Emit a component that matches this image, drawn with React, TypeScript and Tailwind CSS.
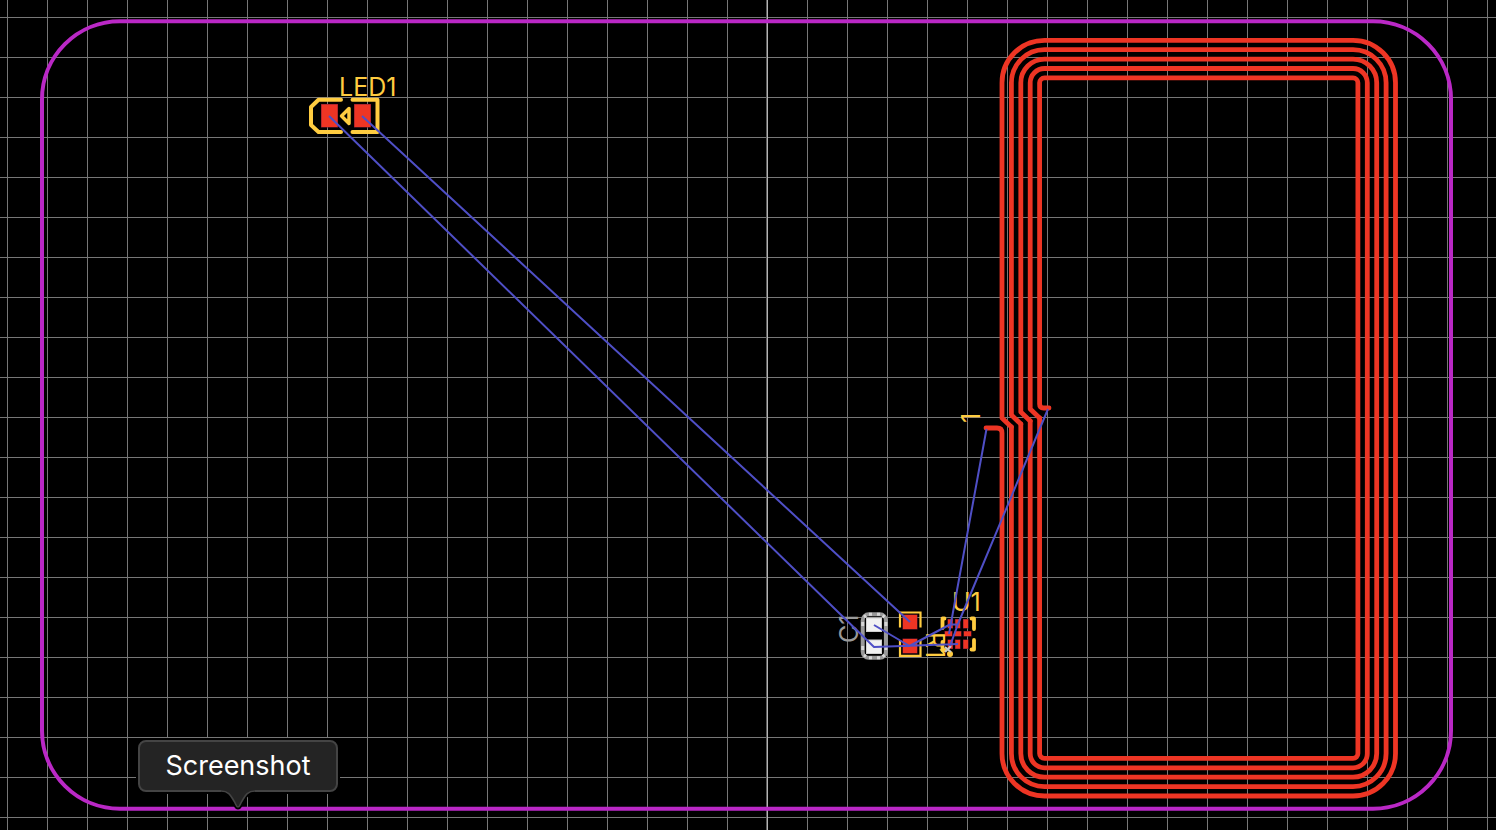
import React from "react";

const CENTER_X = 1044.5;
const RED = "#ee3524";
const GOLD = "#ffcc40";
const VIOLET = "#4f4fc6";

const columns = Array.from({ length: 38 }, (_, i) => 7 + i * 40);
const rows = Array.from({ length: 21 }, (_, i) => 17 + i * 40);

const coilTurns = [
  { from: 418, next: 427 },
  { from: 415, next: 424 },
  { from: 412, next: 421 },
  { from: 409, next: 418 },
  { from: 404, next: 0 },
];

/* One turn runs from its lower left start around to its upper left end. */
function turnPath(i: number): string {
  const inset = i * 9.4;
  const left = 1002 + inset;
  const right = 1395.5 - inset;
  const top = 40.3 + inset;
  const bottom = 796 - inset;
  const r = CENTER_X - left;
  const startY = i === 0 ? 433 : coilTurns[i - 1].next;
  const lead = i === 0 ? "M986 428H997Q1002 428 1002 433" : `M${left} ${startY}`;
  const tail =
    i === 4
      ? `V404Q${left} 408 ${left + 4} 408H1049`
      : `V${coilTurns[i].from}L${left + 9.4} ${coilTurns[i].next}`;
  return (
    `${lead}V${bottom - r}A${r} ${r} 0 0 0 ${left + r} ${bottom}H${right - r}` +
    `A${r} ${r} 0 0 0 ${right} ${bottom - r}V${top + r}A${r} ${r} 0 0 0 ${right - r} ${top}` +
    `H${left + r}A${r} ${r} 0 0 0 ${left} ${top + r}${tail}`
  );
}

function Grid() {
  return (
    <g shapeRendering="crispEdges" fill="#777777">
      {columns.map((x) => (
        <rect key={x} x={x} y="0" width="1" height="830" />
      ))}
      {rows.map((y) => (
        <rect key={y} x="0" y={y} width="1496" height="1" />
      ))}
      <rect x="766" y="0" width="1" height="830" fill="#5c5c5c" />
      <rect x="767" y="0" width="1" height="830" fill="#b4b4b4" />
    </g>
  );
}

function Pad({ x, y, w, h }: { x: number; y: number; w: number; h: number }) {
  return (
    <g stroke="none">
      <rect x={x - 0.5} y={y - 0.5} width={w + 1} height={h + 1} fill="#7d1a33" />
      <rect x={x} y={y} width={w} height={h} fill={RED} />
    </g>
  );
}

function Led() {
  return (
    <g fill="none" stroke={GOLD} strokeWidth="4" strokeLinecap="round" strokeLinejoin="round">
      <path d="M341 99.8H318.5L311 107V125L318.5 132H341M352.5 99.8H377.5V132H352.5" />
      <path d="M349 108.5V123.5L341.5 116Z" strokeWidth="3.5" />
      <Pad x={321.5} y={104.5} w={16} h={22.5} />
      <Pad x={354.5} y={104.5} w={16} h={22.5} />
    </g>
  );
}

function Capacitor() {
  return (
    <g>
      <rect x="862.7" y="614.3" width="23.2" height="43.5" rx="6" fill="none" stroke="#999999" strokeWidth="4" />
      <path
        d="M862.7 622V626M862.7 646V650M885.9 622V626M885.9 646V650M869 614.3H872M877 614.3H880M869 657.8H872M877 657.8H880M864 617L866 615.5M884.6 617L882.6 615.5M864 655L866 656.5M884.6 655L882.6 656.5"
        stroke="#d6d6d6"
        strokeWidth="3"
        fill="none"
      />
      <rect x="866.5" y="618" width="15" height="13.5" fill="#f1f1f1" stroke="#d0d0d0" />
      <rect x="866.5" y="640" width="15" height="13.5" fill="#f1f1f1" stroke="#d0d0d0" />
    </g>
  );
}

function Resistor() {
  return (
    <g>
      <path d="M900 627.5V612.5H920.5V627.5M900 640V655.8H920.5V640" fill="none" stroke={GOLD} strokeWidth="2.2" />
      <Pad x={903} y={615} w={14} h={14} />
      <Pad x={903} y={639} w={14} h={14} />
    </g>
  );
}

function Chip() {
  return (
    <g>
      {[948, 955.5, 963.5].map((x) => (
        <g key={x}>
          <Pad x={x} y={619.5} w={4.5} h={8.5} />
          <Pad x={x} y={640} w={4.5} h={8.5} />
        </g>
      ))}
      <Pad x={945} y={631.5} w={7} h={4.5} />
      <Pad x={955} y={631.5} w={6} h={4.5} />
      <Pad x={964} y={631.5} w={7} h={4.5} />
      <path
        d="M944.5 618.5H942.5V628M942.5 642V650H944.5M971.5 618.5H974V629M974 640V649.5H971.5"
        fill="none"
        stroke={GOLD}
        strokeWidth="3.8"
        strokeLinecap="round"
        strokeLinejoin="round"
      />
      <circle cx="950" cy="654" r="3" fill={GOLD} />
      <path d="M945 647L951 652M951 646L945 652" stroke="#cccccc" strokeWidth="2" />
    </g>
  );
}

function Labels() {
  return (
    <g fill={GOLD} fontFamily="Inter, sans-serif" fontSize="25" fontWeight="400">
      <text x="339" y="96">LED1</text>
      <text x="952" y="611">U1</text>
      <text transform="translate(858 643) rotate(-90)" fill="#999999">C1</text>
      <text transform="translate(926 632) rotate(90)">R1</text>
      <text transform="translate(980 423) rotate(-90)">1</text>
    </g>
  );
}

function Ratlines() {
  return (
    <path
      d="M329 116L874 647L958 644M362 116L910 622M874 625L909.5 646L950 624.5H958M986.5 429L949 634M1048 409L958 624L950 646"
      fill="none"
      stroke={VIOLET}
      strokeWidth="2"
      strokeLinejoin="round"
    />
  );
}

function Tooltip() {
  return (
    <div role="tooltip" className="absolute bottom-[38px] left-[138px]">
      <div className="flex h-[52px] w-[200px] items-center justify-center rounded-lg border-2 border-[#444444] bg-[#242424] font-['Inter',sans-serif] text-[27px] leading-8 text-white ring-2 ring-black">
        Screenshot
      </div>
      <svg className="absolute top-[49px] left-[78px]" width="44" height="22" viewBox="0 0 44 22" aria-hidden="true">
        <path d="M5 2C13 2 15 7 18 12C20 15 20 18 22 18C24 18 24 15 26 12C29 7 31 2 39 2" fill="none" stroke="#000000" strokeWidth="5" />
        <path d="M5 0V2C13 2 15 7 18 12C20 15 20 18 22 18C24 18 24 15 26 12C29 7 31 2 39 2V0Z" fill="#242424" />
        <path d="M5 2C13 2 15 7 18 12C20 15 20 18 22 18C24 18 24 15 26 12C29 7 31 2 39 2" fill="none" stroke="#444444" strokeWidth="1.6" />
      </svg>
    </div>
  );
}

export default function App() {
  return (
    <main className="relative h-screen w-full overflow-hidden bg-black">
      <svg
        className="block h-full w-full"
        viewBox="0 0 1496 830"
        preserveAspectRatio="xMidYMid slice"
        role="img"
        aria-label="Circuit board layout"
      >
        <Grid />
        <rect x="42" y="21.3" width="1409" height="787.4" rx="78" fill="none" stroke="#ba28c6" strokeWidth="4" />
        <g fill="none" stroke={RED} strokeWidth="4.8" strokeLinecap="round" strokeLinejoin="round">
          {coilTurns.map((turn, i) => (
            <path key={turn.from} d={turnPath(i)} />
          ))}
        </g>
        <Led />
        <Capacitor />
        <Resistor />
        <Chip />
        <Labels />
        <Ratlines />
      </svg>
      <Tooltip />
    </main>
  );
}
